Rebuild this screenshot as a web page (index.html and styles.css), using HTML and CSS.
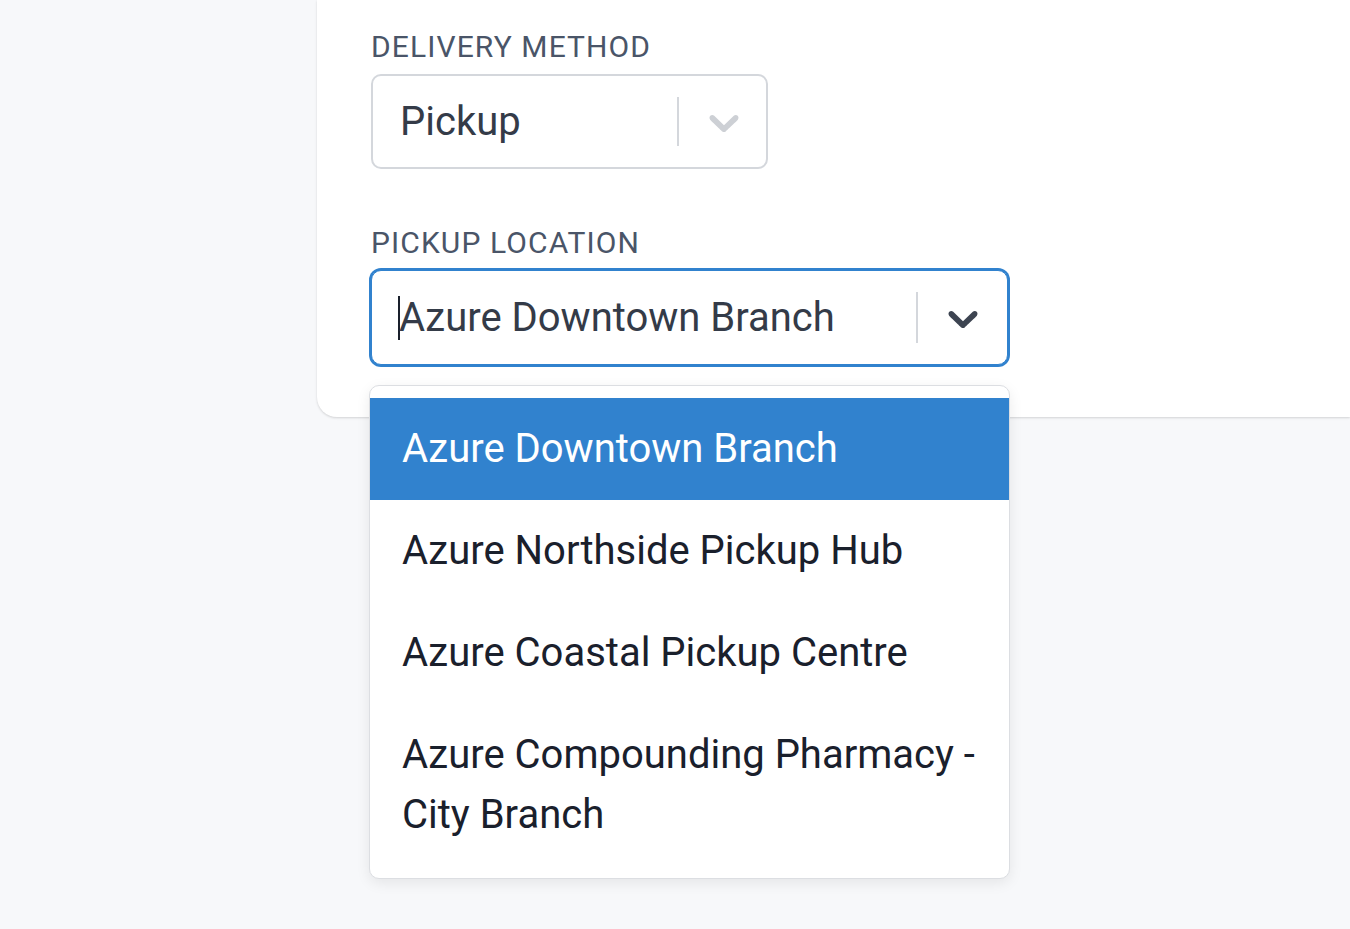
FILE: index.html
```html
<!DOCTYPE html>
<html lang="en">
<head>
    <meta charset="UTF-8">
    <meta name="viewport" content="width=device-width, initial-scale=1.0">
    <title>Checkout - Delivery</title>
    <link rel="stylesheet" href="styles.css">
</head>
<body>
    <div class="page">
        <div class="card">
            <div class="field">
                <div class="label">Delivery method</div>
                <div class="select">
                    <div class="value">Pickup</div>
                    <div class="indicators">
                        <span class="separator"></span>
                        <svg class="chevron" viewBox="0 0 20 20"><path d="M4.516 7.548c0.436-0.446 1.043-0.481 1.576 0l3.908 3.747 3.908-3.747c0.533-0.481 1.141-0.446 1.574 0 0.436 0.445 0.408 1.197 0 1.615-0.406 0.418-4.695 4.502-4.695 4.502-0.217 0.223-0.502 0.335-0.787 0.335s-0.57-0.112-0.789-0.335c0 0-4.287-4.084-4.695-4.502s-0.436-1.17 0-1.615z"/></svg>
                    </div>
                </div>
            </div>

            <div class="field wide">
                <div class="label">Pickup location</div>
                <div class="select focused">
                    <div class="value"><span class="caret"></span>Azure Downtown Branch</div>
                    <div class="indicators">
                        <span class="separator"></span>
                        <svg class="chevron" viewBox="0 0 20 20"><path d="M4.516 7.548c0.436-0.446 1.043-0.481 1.576 0l3.908 3.747 3.908-3.747c0.533-0.481 1.141-0.446 1.574 0 0.436 0.445 0.408 1.197 0 1.615-0.406 0.418-4.695 4.502-4.695 4.502-0.217 0.223-0.502 0.335-0.787 0.335s-0.57-0.112-0.789-0.335c0 0-4.287-4.084-4.695-4.502s-0.436-1.17 0-1.615z"/></svg>
                    </div>
                </div>

                <!-- open menu -->
                <div class="menu">
                    <div class="option selected">Azure Downtown Branch</div>
                    <div class="option">Azure Northside Pickup Hub</div>
                    <div class="option">Azure Coastal Pickup Centre</div>
                    <div class="option">Azure Compounding Pharmacy - City Branch</div>
                </div>
            </div>
        </div>
    </div>
</body>
</html>
```

FILE: styles.css
```css
body {
    margin: 0;
    overflow: hidden;
    font-family: Roboto, "Liberation Sans", Arial, sans-serif;
    background-color: #f7f8fa;
    height: 100vh;
}

.page {
    padding-left: 317px;
}

.card {
    background: #fff;
    border-radius: 0 0 0 20px;
    box-shadow: 0 1px 3px rgba(0, 0, 0, 0.1), 0 1px 2px rgba(0, 0, 0, 0.06);
    padding: 29px 0 52px 54px;
    display: flex;
    flex-direction: column;
    gap: 56px;
}

.field {
    position: relative;
    width: 397px;
}

.field.wide {
    width: 637px;
}

.label {
    font-size: 30px;
    line-height: 36px;
    letter-spacing: 1.1px;
    text-transform: uppercase;
    color: #4a5568;
    margin-bottom: 9px;
}

.select {
    display: flex;
    align-items: center;
    height: 95px;
    box-sizing: border-box;
    border: 2px solid #d4d7dc;
    border-radius: 10px;
    background: #fff;
}

.select.focused {
    border-color: #3182ce;
    box-shadow: 0 0 0 2px #3182ce;
    border-width: 1px;
}

.value {
    flex: 1;
    display: flex;
    align-items: center;
    padding-left: 27px;
    font-size: 40px;
    color: #343b48;
    white-space: nowrap;
}

.caret {
    width: 2px;
    height: 44px;
    background: #1a202c;
    margin-left: -1px;
    margin-right: -1px;
}

.indicators {
    display: flex;
    align-items: center;
    align-self: stretch;
}

.separator {
    width: 2.5px;
    align-self: stretch;
    margin: 21px 0;
    background: #d4d7dc;
}

.chevron {
    width: 50px;
    height: 50px;
    padding: 0 17px 0 20px;
    fill: #cdd0d5;
}

.focused .chevron {
    padding-right: 19px;
    fill: #3d4451;
}

.menu {
    position: absolute;
    top: 100%;
    left: -2px;
    right: -2px;
    margin-top: 20px;
    background: #fff;
    border: 1px solid #dcdee2;
    border-radius: 10px;
    box-shadow: 0 4px 14px rgba(0, 0, 0, 0.08);
    padding: 12px 0 12px;
    z-index: 2;
}

.option {
    padding: 21px 32px;
    font-size: 40px;
    line-height: 60px;
    color: #1a202c;
}

.option.selected {
    background: #3182ce;
    color: #fff;
}
```
